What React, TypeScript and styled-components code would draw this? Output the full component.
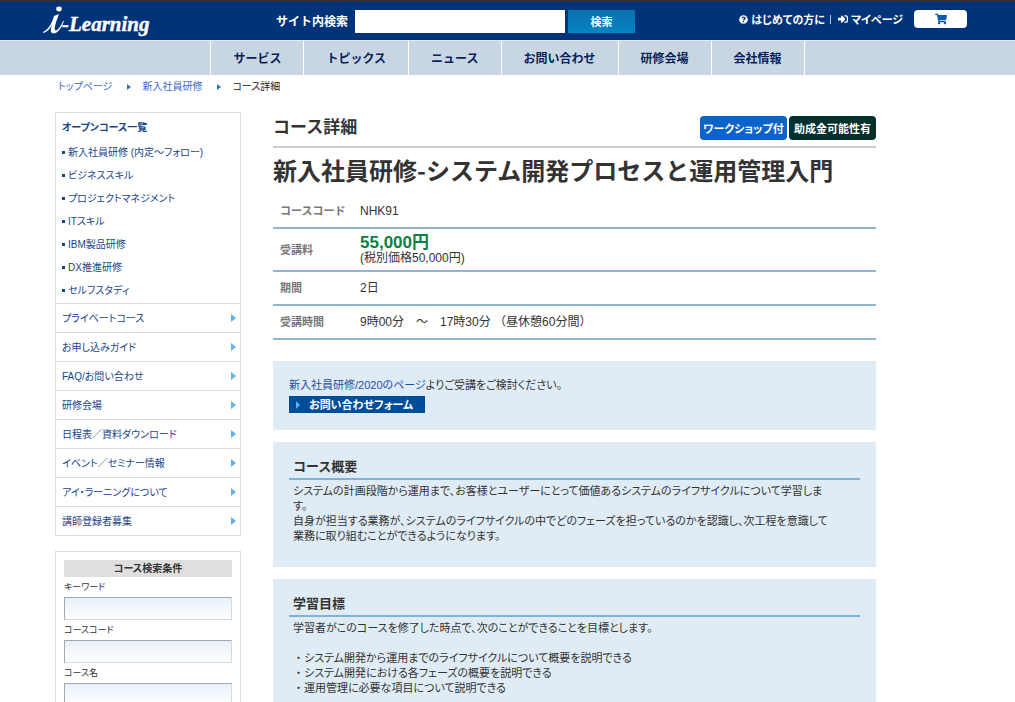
import React from 'react';
import styled, { createGlobalStyle } from 'styled-components';
import { FaQuestionCircle, FaShoppingCart, FaSignInAlt } from 'react-icons/fa';

const jp = '"Noto Sans CJK JP", sans-serif';
const mixed = '"Liberation Sans", "Noto Sans CJK JP", sans-serif';

const GlobalStyle = createGlobalStyle`
  *, *::before, *::after { box-sizing: border-box; }
  body {
    margin: 0;
    background: #fff;
    color: #333;
    font-family: ${mixed};
    font-size: 11px;
    font-feature-settings: "palt";
  }
  a { color: inherit; text-decoration: none; }
  h1, h2, h3, p, ul, ol { margin: 0; padding: 0; }
  ul, ol { list-style: none; }
  button, input { font-family: inherit; font-feature-settings: inherit; border-radius: 0; }
`;

const Header = styled.header`
  background: #003378;
  border-top: 2px solid #2f3136;
`;

const HeaderInner = styled.div`
  display: flex;
  align-items: center;
  max-width: 1015px;
  height: 38px;
  margin: 0 auto;
  padding: 0 48px 0 42px;
  color: #fff;
`;

const LogoLink = styled.a`
  display: block;
  width: 108px;
  height: 34px;
  margin-right: 126px;
`;

const SiteSearch = styled.form`
  display: flex;
  align-items: center;
  font: 700 12px/16px ${jp};
`;

const SiteSearchInput = styled.input`
  width: 210px;
  height: 23px;
  margin: 0 3px 0 7px;
  padding: 0 6px;
  border: 0;
  background: #fff;
  font-size: 12px;
`;

const SiteSearchButton = styled.button`
  width: 67px;
  height: 23px;
  padding: 0;
  border: 0;
  background: linear-gradient(#0b6fae, #0585c3);
  color: #fff;
  font-size: 11px;
  font-weight: 700;
`;

const UserLinks = styled.div`
  display: flex;
  align-items: center;
  align-self: flex-start;
  height: 22px;
  margin-top: 6px;
  margin-left: auto;
  font: 700 11px/16px ${jp};
  font-feature-settings: "palt";
`;

const UserLink = styled.a`
  display: flex;
  align-items: center;
  gap: 3px;
  white-space: nowrap;

  & + & {
    margin-left: 5px;
    padding-left: 8px;
    background: linear-gradient(#b9c7dc, #b9c7dc) left center / 1px 9px no-repeat;
  }
`;

const CartButton = styled.button`
  display: flex;
  align-items: center;
  justify-content: center;
  width: 53px;
  height: 18px;
  margin-left: 11px;
  padding: 0;
  border: 0;
  border-radius: 4px;
  background: #fff;
  color: #0b5cab;
`;

const GlobalNav = styled.nav`
  display: flex;
  justify-content: center;
  height: 35px;
  border-top: 1px solid #e3ebf2;
  background: #c8d6e3;
`;

const NavList = styled.ul`
  display: flex;
  border-left: 1px solid #fff;
`;

const NavLink = styled.a`
  display: block;
  height: 34px;
  padding: 0 22px;
  border-right: 1px solid #fff;
  color: #0a1f5c;
  font: 700 12px/33px ${jp};
`;

const Container = styled.div`
  max-width: 1015px;
  margin: 0 auto;
  padding: 0 139px 0 55px;
`;

const Breadcrumb = styled.ol`
  display: flex;
  height: 37px;
  padding-left: 3px;
  font-size: 10px;
  line-height: 24px;
`;

const Crumb = styled.li<{ $current?: boolean }>`
  display: flex;
  align-items: center;
  height: 24px;
  color: ${(p) => (p.$current ? '#222' : '#4169c9')};

  &:not(:first-child)::before {
    content: '';
    margin: 0 11px 0 15px;
    border: 3px solid transparent;
    border-left: 4px solid #1f78d1;
    border-right: 0;
  }
`;

const Columns = styled.div`
  display: flex;
  align-items: flex-start;
  gap: 32px;
`;

const Sidebar = styled.aside`
  flex: none;
  width: 186px;
`;

const Panel = styled.div`
  border: 1px solid #dcdce0;
`;

const OpenCourses = styled.div`
  padding: 2px 6px 1px;
  color: #17448c;
`;

const OpenCoursesTitle = styled.h2`
  font-size: 10px;
  line-height: 26px;
`;

const CourseItem = styled.li`
  display: flex;
  align-items: center;
  font-size: 10px;
  line-height: 23px;

  &::before {
    content: '';
    width: 3px;
    height: 3px;
    margin-right: 3px;
    background: #17448c;
  }
`;

const MenuLink = styled.a`
  display: flex;
  align-items: center;
  justify-content: space-between;
  height: 29px;
  padding: 0 4px 1px 6px;
  border-top: 1px solid #dcdce0;
  color: #17448c;
  font-size: 10px;

  &::after {
    content: '';
    border: 4px solid transparent;
    border-left: 5px solid #62b0f0;
    border-right: 0;
  }
`;

const SearchPanel = styled(Panel)`
  margin-top: 15px;
  padding: 8px;
`;

const SearchTitle = styled.h2`
  background: #dfdfdf;
  font-size: 10px;
  line-height: 17px;
  text-align: center;
`;

const SearchLabel = styled.label`
  display: block;
  font-size: 9px;
  line-height: 20px;
`;

const SearchInput = styled.input`
  display: block;
  width: 100%;
  height: 23px;
  padding: 0 4px;
  border: 1px solid #d5dadd;
  border-top-color: #a3a9ad;
  border-left-color: #a3a9ad;
  background: linear-gradient(#e7f1fb, #fff);
  font-size: 11px;
`;

const Main = styled.main`
  flex: 1;
  min-width: 0;
`;

const PageHead = styled.div`
  display: flex;
  align-items: flex-end;
  justify-content: space-between;
  height: 36px;
  padding-bottom: 6px;
  border-bottom: 2px solid #ccc;
`;

const PageLabel = styled.h2`
  font: 700 17px/28px ${jp};
`;

const Badges = styled.div`
  display: flex;
  gap: 2px;
`;

const Badge = styled.span<{ $color: string }>`
  width: 87px;
  border-radius: 4px;
  background: ${(p) => p.$color};
  color: #fff;
  font: 700 11px/24px ${jp};
  font-feature-settings: "palt";
  text-align: center;
  white-space: nowrap;
`;

const CourseTitle = styled.h1`
  padding: 4px 0 6px;
  font: 700 24px/36px ${jp};
`;

const Details = styled.table`
  width: 100%;
  border-collapse: collapse;
  font: 400 12px/14px ${mixed};
`;

const DetailRow = styled.tr<{ $tall?: boolean }>`
  height: ${(p) => (p.$tall ? 43 : 34)}px;
  border-bottom: 2px solid #8fb7d1;
`;

const DetailName = styled.th`
  width: 87px;
  padding: 0 0 0 7px;
  color: #777;
  font-size: 11px;
  text-align: left;
`;

const DetailValue = styled.td`
  padding: 0;
`;

const Price = styled.strong`
  display: block;
  color: #0b8043;
  font-size: 17px;
  line-height: 16px;
`;

const Box = styled.section`
  margin-top: 12px;
  padding: 14px 16px 23px;
  background: #e0ecf5;
`;

const Notice = styled(Box)`
  margin-top: 21px;
  padding: 17px 16px;
`;

const NoticeText = styled.p`
  line-height: 15px;

  a { color: #1c4fa5; }
`;

const FormButton = styled.a`
  display: inline-flex;
  align-items: center;
  height: 17px;
  margin-top: 3px;
  padding: 0 12px 0 7px;
  background: #004d99;
  color: #fff;
  font: 700 11px/17px ${jp};
  font-feature-settings: "palt";

  &::before {
    content: '';
    margin-right: 9px;
    border: 4px solid transparent;
    border-left: 4px solid #62b0f0;
    border-right: 0;
  }
`;

const BoxTitle = styled.h3`
  padding: 0 4px 2px;
  border-bottom: 2px solid #7fb2d8;
  font: 700 13px/20px ${jp};
`;

const BoxText = styled.p`
  padding: 4px 30px 0 4px;
  line-height: 15px;
  white-space: pre-line;
`;

const GoalList = styled.ul`
  padding: 15px 4px 0;
  line-height: 15px;
`;

const GoalMark = styled.span`
  font-feature-settings: normal;
`;

const nav = ['サービス', 'トピックス', 'ニュース', 'お問い合わせ', '研修会場', '会社情報'];
const courses = [
  '新入社員研修 (内定〜フォロー)',
  'ビジネススキル',
  'プロジェクトマネジメント',
  'ITスキル',
  'IBM製品研修',
  'DX推進研修',
  'セルフスタディ',
];
const menu = [
  'プライベートコース',
  'お申し込みガイド',
  'FAQ/お問い合わせ',
  '研修会場',
  '日程表／資料ダウンロード',
  'イベント／セミナー情報',
  'アイ・ラーニングについて',
  '講師登録者募集',
];
const fields = [
  { id: 'keyword', label: 'キーワード' },
  { id: 'code', label: 'コースコード' },
  { id: 'name', label: 'コース名' },
];
const goals = [
  'システム開発から運用までのライフサイクルについて概要を説明できる',
  'システム開発における各フェーズの概要を説明できる',
  '運用管理に必要な項目について説明できる',
];

const overview = `システムの計画段階から運用まで、お客様とユーザーにとって価値あるシステムのライフサイクルについて学習します。
自身が担当する業務が、システムのライフサイクルの中でどのフェーズを担っているのかを認識し、次工程を意識して業務に取り組むことができるようになります。`;

function Logo() {
  return (
    <svg width="108" height="34" viewBox="0 0 108 34" role="img" aria-label="i-Learning" fill="#fff">
      <ellipse cx="17" cy="5" rx="2.8" ry="2.4" />
      <path d="M1 28 C7 25 10 19 12 12 L17 10 C14 18 12 24 13 26 C15 28 19 22 21 17 L22 17 C19 26 14 31 10 29 C8 28 9 24 10 21 C8 25 5 28 1 29 Z" />
      <text x="20" y="27" fontFamily="Liberation Serif, serif" fontSize="21" fontWeight="700" fontStyle="italic" stroke="#fff" strokeWidth="0.4">
        -Learning
      </text>
    </svg>
  );
}

export default function App() {
  return (
    <>
      <GlobalStyle />
      <Header>
        <HeaderInner>
          <LogoLink href="#"><Logo /></LogoLink>
          <SiteSearch onSubmit={(e) => e.preventDefault()}>
            <label htmlFor="site-search">サイト内検索</label>
            <SiteSearchInput id="site-search" type="text" />
            <SiteSearchButton type="submit">検索</SiteSearchButton>
          </SiteSearch>
          <UserLinks>
            <UserLink href="#"><FaQuestionCircle size={9} />はじめての方に</UserLink>
            <UserLink href="#"><FaSignInAlt size={10} />マイページ</UserLink>
            <CartButton type="button" aria-label="カート"><FaShoppingCart size={12} /></CartButton>
          </UserLinks>
        </HeaderInner>
      </Header>
      <GlobalNav>
        <NavList>
          {nav.map((item) => (
            <li key={item}><NavLink href="#">{item}</NavLink></li>
          ))}
        </NavList>
      </GlobalNav>
      <Container>
        <Breadcrumb>
          <Crumb><a href="#">トップページ</a></Crumb>
          <Crumb><a href="#">新入社員研修</a></Crumb>
          <Crumb $current>コース詳細</Crumb>
        </Breadcrumb>
        <Columns>
          <Sidebar>
            <Panel>
              <OpenCourses>
                <OpenCoursesTitle>オープンコース一覧</OpenCoursesTitle>
                <ul>
                  {courses.map((item) => (
                    <CourseItem key={item}><a href="#">{item}</a></CourseItem>
                  ))}
                </ul>
              </OpenCourses>
              <ul>
                {menu.map((item) => (
                  <li key={item}><MenuLink href="#">{item}</MenuLink></li>
                ))}
              </ul>
            </Panel>
            <SearchPanel as="form">
              <SearchTitle>コース検索条件</SearchTitle>
              {fields.map((field) => (
                <React.Fragment key={field.id}>
                  <SearchLabel htmlFor={field.id}>{field.label}</SearchLabel>
                  <SearchInput id={field.id} type="text" />
                </React.Fragment>
              ))}
            </SearchPanel>
          </Sidebar>
          <Main>
            <PageHead>
              <PageLabel>コース詳細</PageLabel>
              <Badges>
                <Badge $color="#0a63cc">ワークショップ付</Badge>
                <Badge $color="#032f2d">助成金可能性有</Badge>
              </Badges>
            </PageHead>
            <CourseTitle>新入社員研修-システム開発プロセスと運用管理入門</CourseTitle>
            <Details>
              <tbody>
                <DetailRow>
                  <DetailName scope="row">コースコード</DetailName>
                  <DetailValue>NHK91</DetailValue>
                </DetailRow>
                <DetailRow $tall>
                  <DetailName scope="row">受講料</DetailName>
                  <DetailValue><Price>55,000円</Price>(税別価格50,000円)</DetailValue>
                </DetailRow>
                <DetailRow>
                  <DetailName scope="row">期間</DetailName>
                  <DetailValue>2日</DetailValue>
                </DetailRow>
                <DetailRow>
                  <DetailName scope="row">受講時間</DetailName>
                  <DetailValue>9時00分　〜　17時30分 （昼休憩60分間）</DetailValue>
                </DetailRow>
              </tbody>
            </Details>
            <Notice>
              <NoticeText><a href="#">新入社員研修/2020のページ</a>よりご受講をご検討ください。</NoticeText>
              <FormButton href="#">お問い合わせフォーム</FormButton>
            </Notice>
            <Box>
              <BoxTitle>コース概要</BoxTitle>
              <BoxText>{overview}</BoxText>
            </Box>
            <Box>
              <BoxTitle>学習目標</BoxTitle>
              <BoxText>学習者がこのコースを修了した時点で、次のことができることを目標とします。</BoxText>
              <GoalList>
                {goals.map((goal) => (
                  <li key={goal}><GoalMark>・</GoalMark>{goal}</li>
                ))}
              </GoalList>
            </Box>
          </Main>
        </Columns>
      </Container>
    </>
  );
}
